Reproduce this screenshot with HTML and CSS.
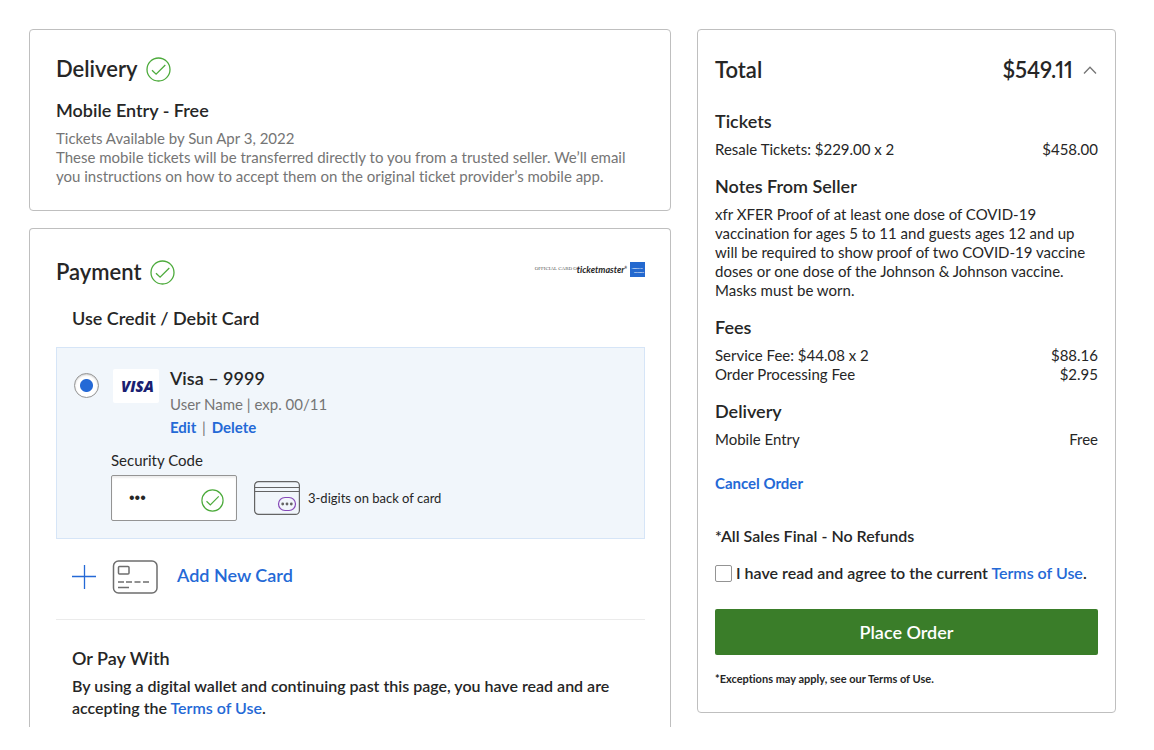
FILE: index.html
```html
<!DOCTYPE html>
<html lang="en">
<head>
<meta charset="utf-8">
<meta name="viewport" content="width=device-width, initial-scale=1">
<title>Checkout</title>
<link rel="stylesheet" href="styles.css">
</head>
<body>
<svg class="sprite" aria-hidden="true">
  <symbol id="check" viewBox="0 0 25 25">
    <circle cx="12.5" cy="12.5" r="11.5"/>
    <path d="M6 13.3l4.1 3.9L19.3 8"/>
  </symbol>
</svg>
<main class="checkout">
  <div class="steps">
    <section class="card delivery">
      <h1 class="title">Delivery <svg class="check"><use href="#check"/></svg></h1>
      <h2 class="subtitle">Mobile Entry - Free</h2>
      <p class="muted">Tickets Available by Sun Apr 3, 2022<br>These mobile tickets will be transferred directly to you from a trusted seller. We’ll email you instructions on how to accept them on the original ticket provider’s mobile app.</p>
    </section>

    <section class="card payment">
      <header class="payment-head">
        <h1 class="title">Payment <svg class="check"><use href="#check"/></svg></h1>
        <div class="partner">
          <span class="partner-text">OFFICIAL CARD OF</span><span class="partner-name">ticketmaster<sup>®</sup></span>
          <svg class="amex" viewBox="0 0 15 15" role="img" aria-label="American Express">
            <rect width="15" height="15" fill="#2469cf"/>
            <text x="7" y="7">AMERICAN</text>
            <text x="9" y="11">EXPRESS</text>
          </svg>
        </div>
      </header>
      <h2 class="subtitle inset">Use Credit / Debit Card</h2>

      <div class="saved-card">
        <input class="radio" type="radio" name="card" id="visa" checked>
        <svg class="visa-logo" viewBox="0 0 46 34" role="img" aria-label="Visa">
          <rect width="46" height="34" rx="2" fill="#fff"/>
          <text x="8" y="23">VISA</text>
        </svg>
        <div class="card-info">
          <label class="subtitle" for="visa">Visa – 9999</label>
          <p class="holder">User Name | exp. 00/11</p>
          <p class="actions"><a href="#">Edit</a> <span>|</span> <a href="#">Delete</a></p>
        </div>
        <div class="security">
          <label for="cvv">Security Code</label>
          <div class="security-row">
            <div class="cvv-box">
              <input id="cvv" type="text" value="•••">
              <svg class="check cvv-check"><use href="#check"/></svg>
            </div>
            <svg class="cvv-card" viewBox="0 0 46 34">
              <rect x=".6" y=".6" width="44.8" height="32.8" rx="4"/>
              <path d="M1 6.5h44M1 10.5h44"/>
              <rect class="spot" x="24.5" y="16.5" width="17" height="13" rx="6.5"/>
              <circle cx="28.700" cy="23" r="1.4"/><circle cx="33" cy="23" r="1.4"/><circle cx="37.300" cy="23" r="1.4"/>
            </svg>
            <span class="hint">3-digits on back of card</span>
          </div>
        </div>
      </div>

      <button class="add-card" type="button">
        <svg class="plus" viewBox="0 0 24 24"><path d="M12.5 0v24M0 11.5h24"/></svg>
        <svg class="new-card" viewBox="0 0 46 34">
          <rect x="1.500" y="1" width="43.500" height="32" rx="5"/>
          <rect x="6.5" y="6.5" width="10.500" height="7.5" rx="1"/>
          <path d="M6 22h6M14 22h6M22.500 22h6M31 22h6M6 27.500h11"/>
        </svg>
        <span>Add New Card</span>
      </button>

      <div class="wallet">
        <h2 class="subtitle">Or Pay With</h2>
        <p>By using a digital wallet and continuing past this page, you have read and are accepting the <a href="#">Terms of Use</a>.</p>
      </div>
    </section>
  </div>

  <aside class="card summary">
    <div class="total title"><span>Total</span>
      <button type="button" class="toggle" aria-label="Collapse order details">$549.11
        <svg viewBox="0 0 14 8"><path d="M1 7.500l6-6.300 6 6.300"/></svg>
      </button>
    </div>
    <section>
      <h2 class="subtitle">Tickets</h2>
      <p class="line"><span>Resale Tickets: $229.00 x 2</span><span>$458.00</span></p>
    </section>
    <section>
      <h2 class="subtitle">Notes From Seller</h2>
      <p class="notes">xfr XFER Proof of at least one dose of COVID-19 vaccination for ages 5 to 11 and guests ages 12 and up will be required to show proof of two COVID-19 vaccine doses or one dose of the Johnson &amp; Johnson vaccine. Masks must be worn.</p>
    </section>
    <section>
      <h2 class="subtitle">Fees</h2>
      <p class="line"><span>Service Fee: $44.08 x 2</span><span>$88.16</span></p>
      <p class="line"><span>Order Processing Fee</span><span>$2.95</span></p>
    </section>
    <section>
      <h2 class="subtitle">Delivery</h2>
      <p class="line"><span>Mobile Entry</span><span>Free</span></p>
    </section>
    <a class="cancel" href="#">Cancel Order</a>
    <p class="final">*All Sales Final - No Refunds</p>
    <div class="agree">
      <input type="checkbox" id="agree">
      <label for="agree">I have read and agree to the current <a href="#">Terms of Use</a>.</label>
    </div>
    <button class="place" type="button">Place Order</button>
    <p class="exceptions">*Exceptions may apply, see our Terms of Use.</p>
  </aside>
</main>
</body>
</html>
```
FILE: styles.css
```css
* { box-sizing: border-box; }
body, h1, h2, p { margin: 0; }
body {
  background: #fff;
  color: #262626;
  font: 15px/19px Lato, "Open Sans", sans-serif;
  font-variant-ligatures: none;
}
a { color: #2469d6; text-decoration: none; font-weight: 700; }
button { font: inherit; color: inherit; background: none; border: 0; padding: 0; cursor: pointer; }
svg { display: block; flex: none; fill: none; }
.sprite { position: absolute; width: 0; height: 0; }

.checkout {
  display: grid;
  grid-template-columns: 642fr 419fr;
  gap: 26px;
  align-items: start;
  padding: 29px 38px 0 29px;
}
.steps { display: grid; gap: 17px; min-width: 0; }
.card { border: 1px solid #bfbfbf; border-radius: 4px; }
.title { display: flex; align-items: center; gap: 8px; font-size: 22px; line-height: 26px; font-weight: 600; }
.subtitle { display: block; font-size: 18px; line-height: 22px; font-weight: 600; }
.check { width: 25px; height: 25px; stroke: #4dab3c; stroke-width: 1.3; }

.delivery { padding: 26px 25px 24px 26px; }
.delivery .subtitle { margin: 17px 0 8px; }
.muted { color: #757575; }

.payment { padding: 30px 25px 8px 26px; border-bottom: 0; border-radius: 4px 4px 0 0; }
.payment-head { display: flex; justify-content: space-between; }
.partner { display: flex; align-items: center; height: 20px; }
.partner-text { margin-right: -3px; font: 5px/10px "Liberation Serif", serif; color: #555; }
.partner-name { font-size: 9px; line-height: 10px; font-weight: 700; font-style: italic; }
.partner-name sup { font-size: 3px; }
.amex { width: 15px; height: 15px; margin-left: 3px; }
.amex text { font: 700 2px "Liberation Sans", sans-serif; fill: #fff; text-anchor: middle; }
.inset { margin: 22px 16px 18px; }

.saved-card {
  display: grid;
  grid-template-columns: 25px 46px 1fr;
  column-gap: 14px;
  align-items: start;
  padding: 19px 16px 17px 17px;
  background: #f1f6fb;
  border: 1px solid #d6e5f7;
}
.radio {
  appearance: none;
  width: 25px; height: 25px;
  margin: 6px 0 0;
  border: 1px solid #949494;
  border-radius: 50%;
  background: radial-gradient(circle, #2469d6 6px, #fff 7px);
  box-shadow: inset 0 1px 2px #ccc;
}
.visa-logo { width: 46px; height: 34px; margin-top: 2px; }
.visa-logo text { font: italic 800 15px "Open Sans", sans-serif; fill: #1a1f71; }
.card-info { margin-left: -3px; }
.holder { margin-top: 5px; line-height: 20px; color: #757575; }
.actions { margin-top: 3px; line-height: 20px; }
.actions span { margin: 0 2px; color: #757575; }
.security { grid-column: 2 / -1; margin: 13px 0 0 -2px; line-height: 20px; }
.security-row { display: flex; align-items: center; margin-top: 5px; }
.cvv-box { position: relative; width: 126px; }
.cvv-box input {
  display: block;
  width: 100%; height: 46px;
  padding: 0 40px 0 17px;
  border: 1px solid #949494;
  border-radius: 2px;
  background: #fff;
  box-shadow: inset 0 2px 2px #eee;
  font: 16px "Liberation Sans", sans-serif;
  color: #262626;
}
.cvv-check { position: absolute; right: 13px; top: 14px; width: 23px; height: 23px; }
.cvv-card { width: 46px; height: 34px; margin: 0 8px 0 17px; stroke: #646464; stroke-width: 1.2; }
.cvv-card .spot { stroke: #8649b8; }
.cvv-card circle { fill: #646464; stroke: none; }
.hint { font-size: 13px; }

.add-card {
  display: flex;
  align-items: center;
  width: 100%;
  padding: 21px 16px 25px;
  border-bottom: 1px solid #ebebeb;
  color: #2469d6;
  font-size: 18px;
  font-weight: 600;
}
.add-card span { padding-bottom: 3px; }
.plus { width: 24px; height: 24px; stroke: #2469d6; stroke-width: 1.3; }
.new-card { width: 46px; height: 34px; margin: 0 19px 0 16px; stroke: #6e6e6e; stroke-width: 1.5; }
.wallet { padding: 27px 16px 0; font-weight: 600; line-height: 22px; }
.wallet p { font-size: 16px; }
.wallet .subtitle { margin-bottom: 6px; }
.wallet a, .agree a { font-weight: 600; }

.summary { padding: 27px 17px 25px; }
.total { justify-content: space-between; margin-bottom: 27px; font-variant-numeric: proportional-nums; }
.toggle { display: flex; align-items: center; gap: 10px; font-variant-numeric: proportional-nums; }
.toggle svg { width: 14px; height: 8px; margin-right: 1px; stroke: #757575; stroke-width: 1.3; }
.summary section { margin-bottom: 16px; }
.summary section .subtitle { margin-bottom: 8px; }
.line { display: flex; justify-content: space-between; }
.notes { padding-right: 10px; }
.cancel { display: block; margin-top: 24px; line-height: 20px; }
.final { margin-top: 33px; font-size: 16px; line-height: 20px; font-weight: 600; }
.agree { display: flex; align-items: center; gap: 4px; margin-top: 17px; font-size: 16px; line-height: 20px; font-weight: 600; }
.agree input {
  appearance: none;
  flex: none;
  width: 17px; height: 17px;
  margin: 0;
  border: 1px solid #949494;
  border-radius: 2px;
}
.place {
  width: 100%; height: 46px;
  margin: 26px 0 16px;
  border-radius: 2px;
  background: #3a7d29;
  color: #fff;
  font-size: 18px;
  font-weight: 600;
}
.exceptions { font-size: 11px; line-height: 16px; font-weight: 700; }
```
